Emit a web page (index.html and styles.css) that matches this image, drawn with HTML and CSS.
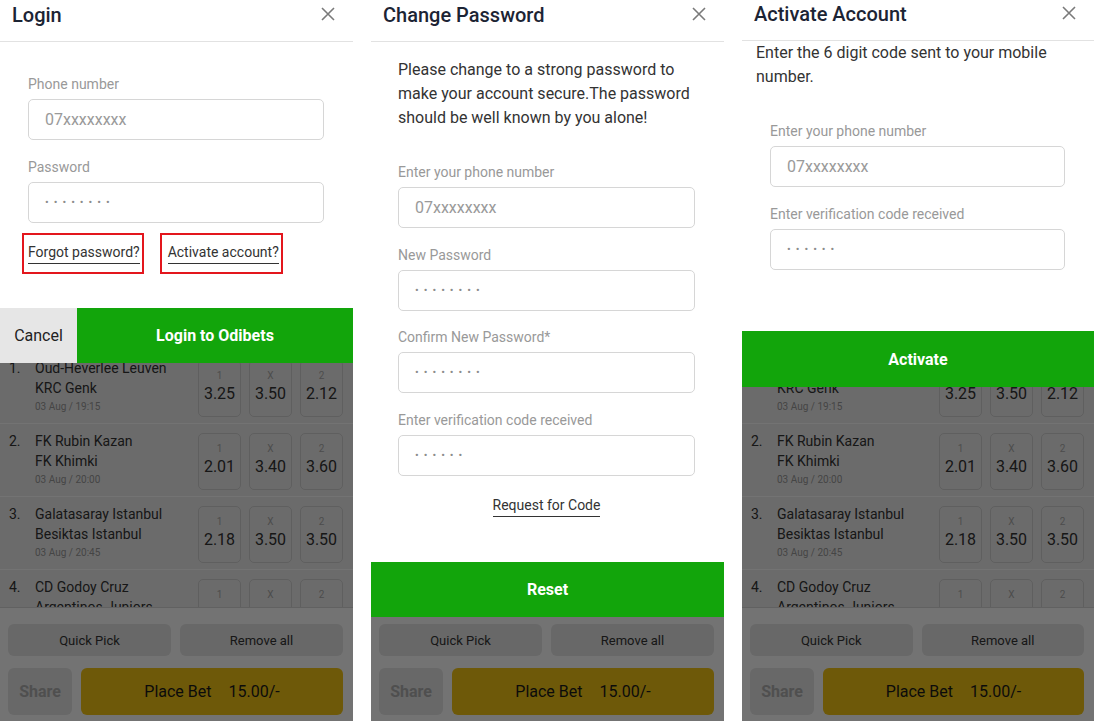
FILE: index.html
```html
<!DOCTYPE html>
<html lang="en">
<head>
<meta charset="utf-8">
<title>Odibets dialogs</title>
<link rel="stylesheet" href="styles.css">
</head>
<body>
<div class="screens">

  <!-- Panel 1: Login -->
  <section class="phone">
    <div class="app">
      <div class="matches">
        <div class="match">
          <span class="num">1.</span>
          <div class="teams"><div class="team">Oud-Heverlee Leuven</div><div class="team">KRC Genk</div><div class="time">03 Aug / 19:15</div></div>
          <div class="odds"><div class="odd"><span class="lbl">1</span><span class="val">3.25</span></div><div class="odd"><span class="lbl">X</span><span class="val">3.50</span></div><div class="odd"><span class="lbl">2</span><span class="val">2.12</span></div></div>
        </div>
        <div class="match">
          <span class="num">2.</span>
          <div class="teams"><div class="team">FK Rubin Kazan</div><div class="team">FK Khimki</div><div class="time">03 Aug / 20:00</div></div>
          <div class="odds"><div class="odd"><span class="lbl">1</span><span class="val">2.01</span></div><div class="odd"><span class="lbl">X</span><span class="val">3.40</span></div><div class="odd"><span class="lbl">2</span><span class="val">3.60</span></div></div>
        </div>
        <div class="match">
          <span class="num">3.</span>
          <div class="teams"><div class="team">Galatasaray Istanbul</div><div class="team">Besiktas Istanbul</div><div class="time">03 Aug / 20:45</div></div>
          <div class="odds"><div class="odd"><span class="lbl">1</span><span class="val">2.18</span></div><div class="odd"><span class="lbl">X</span><span class="val">3.50</span></div><div class="odd"><span class="lbl">2</span><span class="val">3.50</span></div></div>
        </div>
        <div class="match">
          <span class="num">4.</span>
          <div class="teams"><div class="team">CD Godoy Cruz</div><div class="team">Argentinos Juniors</div></div>
          <div class="odds"><div class="odd"><span class="lbl">1</span></div><div class="odd"><span class="lbl">X</span></div><div class="odd"><span class="lbl">2</span></div></div>
        </div>
      </div>
      <div class="betbar">
        <div class="bar-row"><button class="bar-btn">Quick Pick</button><button class="bar-btn">Remove all</button></div>
        <div class="bar-row2"><button class="share">Share</button><button class="place">Place Bet<span class="amount">15.00/-</span></button></div>
      </div>
    </div>
    <div class="dim"></div>
    <div class="modal">
      <header class="modal-head">
        <h2 class="modal-title">Login</h2>
        <svg class="close" width="14" height="14" viewBox="0 0 14 14"><path d="M1 1L13 13M13 1L1 13" stroke="#7a7a7a" stroke-width="1.6" fill="none"/></svg>
      </header>
      <div class="modal-body login-body">
        <div class="field"><label class="label">Phone number</label><div class="input"><span class="ph">07xxxxxxxx</span></div></div>
        <div class="field"><label class="label">Password</label><div class="input"><span class="dots">••••••••</span></div></div>
        <div class="links">
          <span class="mark"><a class="link">Forgot password?</a></span>
          <span class="mark mark-wide"><a class="link">Activate account?</a></span>
        </div>
      </div>
      <div class="actions">
        <button class="btn-cancel">Cancel</button>
        <button class="btn-primary">Login to Odibets</button>
      </div>
    </div>
  </section>

  <!-- Panel 2: Change Password -->
  <section class="phone">
    <div class="app">
      <div class="matches"></div>
      <div class="betbar">
        <div class="bar-row"><button class="bar-btn">Quick Pick</button><button class="bar-btn">Remove all</button></div>
        <div class="bar-row2"><button class="share">Share</button><button class="place">Place Bet<span class="amount">15.00/-</span></button></div>
      </div>
    </div>
    <div class="dim"></div>
    <div class="modal">
      <header class="modal-head">
        <h2 class="modal-title">Change Password</h2>
        <svg class="close" width="14" height="14" viewBox="0 0 14 14"><path d="M1 1L13 13M13 1L1 13" stroke="#7a7a7a" stroke-width="1.6" fill="none"/></svg>
      </header>
      <div class="modal-body change-body">
        <p class="intro">Please change to a strong password to make your account secure.The password should be well known by you alone!</p>
        <div class="field"><label class="label">Enter your phone number</label><div class="input"><span class="ph">07xxxxxxxx</span></div></div>
        <div class="field"><label class="label">New Password</label><div class="input"><span class="dots">••••••••</span></div></div>
        <div class="field"><label class="label">Confirm New Password*</label><div class="input"><span class="dots">••••••••</span></div></div>
        <div class="field"><label class="label">Enter verification code received</label><div class="input"><span class="dots">••••••</span></div></div>
        <div class="request"><a class="link">Request for Code</a></div>
      </div>
      <div class="actions">
        <button class="btn-primary">Reset</button>
      </div>
    </div>
  </section>

  <!-- Panel 3: Activate Account -->
  <section class="phone">
    <div class="app">
      <div class="matches">
        <div class="match">
          <span class="num">1.</span>
          <div class="teams"><div class="team">Oud-Heverlee Leuven</div><div class="team">KRC Genk</div><div class="time">03 Aug / 19:15</div></div>
          <div class="odds"><div class="odd"><span class="lbl">1</span><span class="val">3.25</span></div><div class="odd"><span class="lbl">X</span><span class="val">3.50</span></div><div class="odd"><span class="lbl">2</span><span class="val">2.12</span></div></div>
        </div>
        <div class="match">
          <span class="num">2.</span>
          <div class="teams"><div class="team">FK Rubin Kazan</div><div class="team">FK Khimki</div><div class="time">03 Aug / 20:00</div></div>
          <div class="odds"><div class="odd"><span class="lbl">1</span><span class="val">2.01</span></div><div class="odd"><span class="lbl">X</span><span class="val">3.40</span></div><div class="odd"><span class="lbl">2</span><span class="val">3.60</span></div></div>
        </div>
        <div class="match">
          <span class="num">3.</span>
          <div class="teams"><div class="team">Galatasaray Istanbul</div><div class="team">Besiktas Istanbul</div><div class="time">03 Aug / 20:45</div></div>
          <div class="odds"><div class="odd"><span class="lbl">1</span><span class="val">2.18</span></div><div class="odd"><span class="lbl">X</span><span class="val">3.50</span></div><div class="odd"><span class="lbl">2</span><span class="val">3.50</span></div></div>
        </div>
        <div class="match">
          <span class="num">4.</span>
          <div class="teams"><div class="team">CD Godoy Cruz</div><div class="team">Argentinos Juniors</div></div>
          <div class="odds"><div class="odd"><span class="lbl">1</span></div><div class="odd"><span class="lbl">X</span></div><div class="odd"><span class="lbl">2</span></div></div>
        </div>
      </div>
      <div class="betbar">
        <div class="bar-row"><button class="bar-btn">Quick Pick</button><button class="bar-btn">Remove all</button></div>
        <div class="bar-row2"><button class="share">Share</button><button class="place">Place Bet<span class="amount">15.00/-</span></button></div>
      </div>
    </div>
    <div class="dim"></div>
    <div class="modal">
      <header class="modal-head modal-head-tight">
        <h2 class="modal-title">Activate Account</h2>
        <svg class="close" width="14" height="14" viewBox="0 0 14 14"><path d="M1 1L13 13M13 1L1 13" stroke="#7a7a7a" stroke-width="1.6" fill="none"/></svg>
      </header>
      <div class="modal-body activate-body">
        <p class="intro intro-wide">Enter the 6 digit code sent to your mobile number.</p>
        <div class="field"><label class="label">Enter your phone number</label><div class="input"><span class="ph">07xxxxxxxx</span></div></div>
        <div class="field"><label class="label">Enter verification code received</label><div class="input"><span class="dots">••••••</span></div></div>
      </div>
      <div class="actions actions-tall">
        <button class="btn-primary">Activate</button>
      </div>
    </div>
  </section>

</div>
</body>
</html>
```

FILE: styles.css
```css
* { box-sizing: border-box; }

body {
  margin: 0;
  background: #fff;
  font-family: Roboto, "Noto Sans", "Liberation Sans", sans-serif;
  color: #333;
}

button {
  font-family: inherit;
  border: 0;
  padding: 0;
  margin: 0;
  cursor: pointer;
}

.screens {
  display: grid;
  grid-template-columns: 353px 353px 352px;
  column-gap: 18px;
  height: 721px;
}

.phone {
  position: relative;
  height: 721px;
  overflow: hidden;
}

/* ---------- background app (dimmed) ---------- */
.app {
  display: flex;
  flex-direction: column;
  height: 100%;
  background: #fff;
}

.matches {
  flex: 1;
  min-height: 0;
  overflow: hidden;
  padding-top: 351px;
}

.match {
  display: flex;
  height: 73px;
  padding: 7px 10px 0 9px;
  background: #eeeeee;
  border-bottom: 1px solid #fff;
}

.num {
  width: 26px;
  font-size: 14px;
  line-height: 20px;
  color: #333;
}

.teams {
  flex: 1;
  min-width: 0;
}

.team {
  font-size: 14px;
  line-height: 20px;
  color: #333;
  white-space: nowrap;
}

.time {
  margin-top: 2px;
  font-size: 10px;
  line-height: 14px;
  color: #999;
}

.odds {
  display: flex;
  gap: 8px;
  margin-top: 2px;
}

.odd {
  width: 43px;
  height: 57px;
  border: 1px solid #d2d2d2;
  border-radius: 5px;
  display: flex;
  flex-direction: column;
  align-items: center;
  padding-top: 9px;
}

.lbl {
  font-size: 10px;
  line-height: 12px;
  color: #aaa;
}

.val {
  margin-top: 2px;
  font-size: 16px;
  line-height: 20px;
  color: #333;
}

.betbar {
  flex: none;
  height: 114px;
  border-top: 1px solid #d8d8d8;
  padding: 16px 10px 0 8px;
  background: #fff;
}

.bar-row {
  display: grid;
  grid-template-columns: 1fr 1fr;
  gap: 9px;
  height: 32px;
}

.bar-btn {
  background: #e6e6e6;
  border-radius: 6px;
  font-size: 13px;
  color: #333;
}

.bar-row2 {
  display: flex;
  gap: 9px;
  height: 47px;
  margin-top: 12px;
}

.share {
  width: 64px;
  background: #e6e6e6;
  border-radius: 6px;
  font-size: 16px;
  font-weight: 700;
  color: #b0b0b0;
}

.place {
  flex: 1;
  background: #f4c514;
  border-radius: 6px;
  font-size: 16px;
  color: #1a1a1a;
}

.amount {
  margin-left: 17px;
}

.dim {
  position: absolute;
  inset: 0;
  background: rgba(0, 0, 0, 0.55);
}

/* ---------- modal ---------- */
.modal {
  position: absolute;
  top: 0;
  left: 0;
  right: 0;
  background: #fff;
  display: flex;
  flex-direction: column;
}

.modal-head {
  display: flex;
  justify-content: space-between;
  align-items: flex-start;
  height: 42px;
  padding: 3px 18px 0 12px;
  border-bottom: 1px solid #e2e2e2;
}

.modal-head-tight {
  height: 41px;
  padding-top: 2px;
}

.modal-title {
  margin: 0;
  font-size: 20px;
  line-height: 24px;
  font-weight: 500;
  color: #1c2434;
}

.close {
  margin-top: 4px;
  display: block;
}

.modal-body {
  padding: 0 29px 0 28px;
}

.login-body {
  padding-top: 34px;
  padding-bottom: 34.5px;
}

.change-body {
  padding-top: 16px;
  padding-bottom: 45.5px;
  padding-left: 27px;
}

.activate-body {
  padding-bottom: 61.5px;
}

.intro {
  margin: 0 0 34px;
  font-size: 16px;
  line-height: 24px;
  color: #333;
}

.intro-wide {
  margin-left: -14px;
  margin-right: -15px;
}

.field + .field {
  margin-top: 18.5px;
}

.label {
  display: block;
  font-size: 14px;
  line-height: 17px;
  color: #999;
  margin-bottom: 6px;
}

.input {
  height: 41px;
  border: 1px solid #d6d6d6;
  border-radius: 5px;
  display: flex;
  align-items: center;
  padding-left: 16px;
}

.ph {
  font-size: 16px;
  color: #9a9a9a;
}

.dots {
  font-size: 11px;
  letter-spacing: 5px;
  color: #8c8c8c;
}

.links {
  display: flex;
  gap: 16px;
  margin-top: 10px;
  margin-left: -6px;
}

.mark {
  display: flex;
  align-items: center;
  height: 41px;
  border: 2px solid #e3161d;
  padding: 2px 2px 0 4px;
}

.mark-wide {
  padding-left: 6px;
}

.link {
  font-size: 14px;
  line-height: 17px;
  color: #333;
  padding-bottom: 2px;
  border-bottom: 1px solid #333;
  text-decoration: none;
}

.request {
  margin-top: 21px;
  display: flex;
  justify-content: center;
}

.actions {
  display: flex;
  height: 55px;
}

.actions-tall {
  height: 56px;
}

.btn-cancel {
  width: 77px;
  background: #e6e6e6;
  color: #222;
  font-size: 16px;
}

.btn-primary {
  flex: 1;
  background: #12a50b;
  color: #fff;
  font-size: 16px;
  font-weight: 700;
}
```
